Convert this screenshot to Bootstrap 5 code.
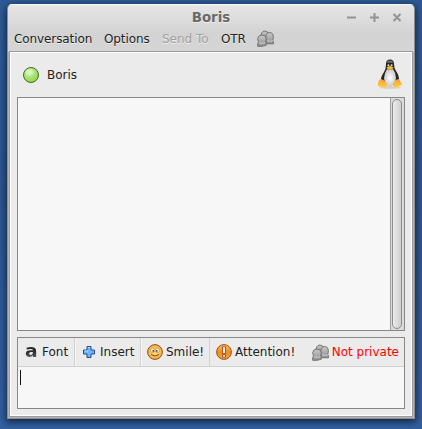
<!DOCTYPE html>
<html lang="en">
<head>
<meta charset="utf-8">
<title>Boris</title>
<link href="https://cdn.jsdelivr.net/npm/bootstrap@5.3.0/dist/css/bootstrap.min.css" rel="stylesheet">
<style>
body{font:12px/16px "DejaVu Sans",sans-serif;color:#222;background:linear-gradient(#2d5a96,#2c5690 45%,#315f9f);height:429px;padding:4px 7px 0;overflow:hidden}
.win{height:415px;width:408px;background:#b4b4b4;border:1px solid #8f8f8f;border-top-color:#f7f7f7;border-radius:5px 5px 0 0;box-shadow:0 2px 7px 1px rgba(0,0,0,.6)}
.head{height:47px;background:linear-gradient(#e6e6e6,#d3d3d3 60%,#d5d5d5);border-radius:4px 4px 0 0;text-shadow:0 1px 0 #eee}
.titlebar{height:24px}
.title{font-weight:bold;font-size:13.33px;color:#6a6a6a;line-height:24px;padding-top:1px}
.ctl{width:76px}
.menus{height:20px;padding-left:6px}
.menus span{line-height:20px;letter-spacing:-.1px}
.off{color:#a0a0a0}
.main{margin:0 2px 0 2px;height:364px;background:#ebebeb;border:1px solid #fff;outline:1px solid #9b9b9b;padding:0 5px 0 6px}
.who{height:44px;padding:0 2px 0 6px}
.pane{border:1px solid #888;background:#f7f7f7;width:388px;flex:none}
.log{height:234px}
.track{width:14px;background:#dadada;border-left:1px solid #a0a0a0;padding:1px}
.thumb{width:10px;height:100%;border:1px solid #8d8d8d;border-radius:5px;background:linear-gradient(90deg,#ececec,#cfcfcf)}
.compose{height:72px;margin-top:6px}
.tools{height:29px;background:#ebebeb;border-bottom:1px solid #d0d0d0}
.tool{height:28px;border-right:1px solid #d0d0d0;border-left:1px solid #f8f8f8}
.tool:first-child{border-left:0}
.caret{width:1px;height:15px;background:#111;margin:3px 0 0 2px}
.red{color:#f00}
.glyph{font-weight:bold;font-size:17px;line-height:18px;color:transparent;background:linear-gradient(#222 25%,#333 60%,#777);-webkit-background-clip:text;background-clip:text;width:11px;margin-top:-2px;transform:scaleX(1.1);transform-origin:left}
svg{display:block;flex:none}
</style>
<script src="https://cdn.jsdelivr.net/npm/bootstrap@5.3.0/dist/js/bootstrap.bundle.min.js"></script>
</head>
<body>
<svg width="0" height="0" class="position-absolute">
<defs>
<radialGradient id="gGreen" cx=".4" cy=".3" r=".7"><stop offset="0" stop-color="#d5f7b4"/><stop offset=".6" stop-color="#a5e070"/><stop offset="1" stop-color="#8fd650"/></radialGradient>
<linearGradient id="gGrey" x2="0" y2="1"><stop offset="0" stop-color="#c8c8c8"/><stop offset="1" stop-color="#8f8f8f"/></linearGradient>
<linearGradient id="gOr" x2="0" y2="1"><stop offset="0" stop-color="#fbbd70"/><stop offset=".5" stop-color="#f08a24"/><stop offset="1" stop-color="#f5a53d"/></linearGradient>
<radialGradient id="gFace"><stop offset="0" stop-color="#ffe793"/><stop offset="1" stop-color="#f3a93c"/></radialGradient>
<radialGradient id="gBelly"><stop offset="0" stop-color="#fff"/><stop offset="1" stop-color="#c9c9c9"/></radialGradient>
<linearGradient id="gFoot" x2="0" y2="1"><stop offset="0" stop-color="#ff9a3c"/><stop offset="1" stop-color="#ffd33a"/></linearGradient>
<symbol id="people" viewBox="0 0 17 17">
<g fill="url(#gGrey)" stroke="#6c6c6c" stroke-width=".9">
<path d="M4 8Q3.500 1 8 1Q11.500 1 11.500 5V10Z"/>
<path d="M9 13.800V11Q9 9.700 8.800 7Q9 2.500 12.600 2.500Q16.300 2.500 16.300 7Q16.300 9 15.800 10.300Q16.500 11 16.500 13.800Z"/>
<path d="M.7 16.300V13.500Q1 12.500 1.700 12Q.5 10 .7 8.500Q1.300 5 5 5Q8.900 5 9.200 8.500Q9.200 10.500 8.400 12.300Q9.300 12.800 9.200 15.300Q5 16.800 .7 16.300Z"/></g>
<path d="M1.800 12.800Q5 14 8.500 12.800M9.800 10.800Q13 11.800 16 10.800" fill="none" stroke="#d4d4d4" stroke-width=".8"/>
</symbol>
</defs></svg>
<div class="win">
 <div class="head">
  <div class="titlebar d-flex align-items-center">
   <div class="ctl"></div>
   <div class="title flex-grow-1 text-center">Boris</div>
   <svg class="ctl" width="76" height="24" fill="none" stroke="#929292" stroke-width="2"><path d="M9 12.500h9M32 12.500h9M36.500 8v9M55.500 9l7 7M62.500 9l-7 7"/></svg>
  </div>
  <div class="menus d-flex">
   <span style="width:90px">Conversation</span><span style="width:58px">Options</span><span class="off" style="width:59px;letter-spacing:0">Send To</span><span style="width:36px">OTR</span>
   <svg width="17" height="17" style="margin-top:1px"><use href="#people"/></svg>
  </div>
 </div>
 <div class="main d-flex flex-column">
  <div class="who d-flex align-items-center justify-content-between">
   <div class="d-flex align-items-center gap-2">
    <svg width="16" height="16"><circle cx="8" cy="8" r="7.500" fill="url(#gGreen)" stroke="#3d7217"/><ellipse cx="6.500" cy="5.500" rx="4" ry="3" fill="#fff" opacity=".25"/></svg><span>Boris</span>
   </div>
   <svg width="28" height="32" viewBox="-1 1 28 32">
    <ellipse cx="13" cy="29.500" rx="11" ry="1.500" fill="#d2d2d2"/>
    <path d="M9 6Q9 1.500 13 1.500Q17 1.500 17 6Q17 10 19 13Q22.500 18 22 23L18 27H8L4 23Q3.500 19 7 14Q9 11 9 6Z" fill="#232527"/>
    <path d="M10 5Q10 2.500 13 2.500Q16 2.500 16 5Q13 4 10 5Z" fill="#74787b"/>
    <path d="M10 11Q13 13 16 11Q19 15 19 20Q18 28 13 28.500Q7.500 28 7 20Q7.500 15 10 11Z" fill="url(#gBelly)"/>
    <circle cx="11.400" cy="7.300" r="1" fill="#ddd"/><circle cx="14.600" cy="7.300" r="1" fill="#ddd"/>
    <path d="M9.500 9.500Q13 6.500 16.500 9.500Q15 12 13 12Q11 12 9.500 9.500Z" fill="#fdbb23"/>
    <path d="M4 21Q6 21 8 23.500Q11 26.500 9.500 29Q7 30.500 4.500 29L1 28Q.5 25.500 1.500 24Q1.500 22 4 21ZM22 21Q20 21 18 22.500Q16 26.500 16.500 29Q19 30.500 21 29L25 26.500Q25 25.500 23.500 24Q23.500 22 22 21Z" fill="url(#gFoot)"/>
   </svg>
  </div>
  <div class="pane log d-flex justify-content-end"><div class="track"><div class="thumb"></div></div></div>
  <div class="pane compose">
   <div class="tools d-flex">
    <div class="tool d-flex align-items-center" style="width:57px"><span class="glyph" style="margin-left:7px;margin-right:6px">a</span>Font</div>
    <div class="tool d-flex align-items-center" style="width:66px"><svg width="14" height="14" style="margin-left:6px;margin-right:4px"><path d="M5 1.500h4V5h3.500v4H9v3.500H5V9H1.500V5H5Z" fill="#72b3f5" stroke="#204c93"/><path d="M6 2.500h2M2.500 6H6" stroke="#bcdfff"/></svg>Insert</div>
    <div class="tool d-flex align-items-center" style="width:69px"><svg width="16" height="16" style="margin-left:5px;margin-right:3px"><circle cx="8" cy="8" r="7.400" fill="url(#gFace)" stroke="#955314"/><circle cx="5.700" cy="6.500" r="2.200" fill="#fff4d4" stroke="#b8771e" stroke-width=".6"/><circle cx="10.300" cy="6.500" r="2.200" fill="#fff4d4" stroke="#b8771e" stroke-width=".6"/><path d="M6.200 6v1.700M9.800 6v1.700" stroke="#222" stroke-width="1.200"/><path d="M4 10.500Q8 13.500 12 10.500" fill="none" stroke="#7c4811"/></svg>Smile!</div>
    <div class="d-flex align-items-center" style="width:95px"><svg width="16" height="16" style="margin-left:6px;margin-right:3px"><circle cx="8" cy="8" r="7.400" fill="url(#gOr)" stroke="#a64e10"/><path d="M6.500 2.800h3v6.700h-3ZM6.500 10.700h3v2.500h-3Z" fill="#fff1dc" stroke="#8d4410" stroke-width=".8"/></svg>Attention!</div>
    <div class="d-flex align-items-center red ms-auto" style="padding-right:5px"><svg width="17" height="17" style="margin-right:3px"><use href="#people"/></svg>Not private</div>
   </div>
   <div class="caret"></div>
  </div>
 </div>
</div>
</body>
</html>
